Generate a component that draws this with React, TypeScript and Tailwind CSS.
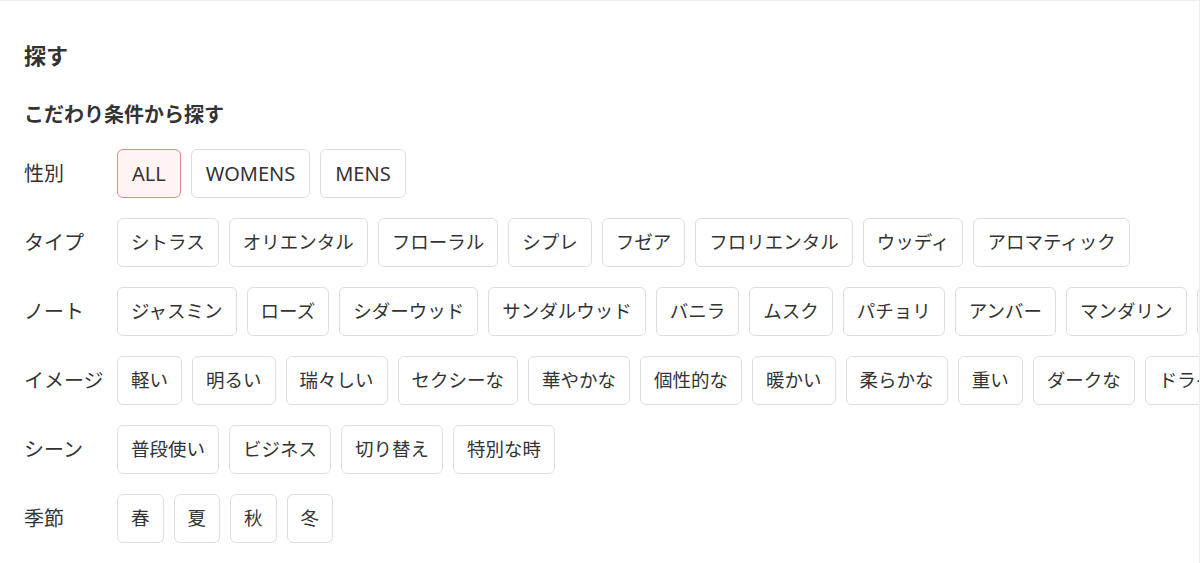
import React, { useState } from 'react'

type Row = {
  label: string
  items: string[]
}

const rows: Row[] = [
  { label: '性別', items: ['ALL', 'WOMENS', 'MENS'] },
  {
    label: 'タイプ',
    items: ['シトラス', 'オリエンタル', 'フローラル', 'シプレ', 'フゼア', 'フロリエンタル', 'ウッディ', 'アロマティック'],
  },
  {
    label: 'ノート',
    items: ['ジャスミン', 'ローズ', 'シダーウッド', 'サンダルウッド', 'バニラ', 'ムスク', 'パチョリ', 'アンバー', 'マンダリン', 'ベルガモット'],
  },
  {
    label: 'イメージ',
    items: ['軽い', '明るい', '瑞々しい', 'セクシーな', '華やかな', '個性的な', '暖かい', '柔らかな', '重い', 'ダークな', 'ドライな'],
  },
  { label: 'シーン', items: ['普段使い', 'ビジネス', '切り替え', '特別な時'] },
  { label: '季節', items: ['春', '夏', '秋', '冬'] },
]

const Chip = ({ text, active, onClick }: { text: string; active: boolean; onClick: () => void }) => {
  const latin = /^[A-Z]+$/.test(text)
  return (
    <button
      type="button"
      onClick={onClick}
      className={
        (active
          ? 'border-[#f08585] bg-[#fff4f4] '
          : 'border-[#dedede] bg-white ') +
        (latin ? 'px-[14px] ' : 'px-[13px] ') +
        'h-[49px] shrink-0 whitespace-nowrap rounded-[6px] border-[1.5px] text-[#333]'
      }
    >
      {latin ? (
        <span className="font-['Noto_Sans',sans-serif] text-[20px] leading-[28px]">{text}</span>
      ) : (
        <span className="text-[18.5px]">{text}</span>
      )}
    </button>
  )
}

export default function App() {
  const [selected, setSelected] = useState<Record<string, string>>({ 性別: 'ALL' })

  return (
    <div className="h-[563px] w-[1200px] overflow-hidden border-t border-r border-[#f2ecec] bg-white font-['Liberation_Sans','Noto_Sans_CJK_JP',sans-serif] text-[#333]">
      <div className="pl-6 pt-[40px]">
        <h1 className="text-[22px] font-bold leading-[32px]">探す</h1>
        <h2 className="mt-[28px] text-[20px] font-bold leading-[28px]">こだわり条件から探す</h2>

        {/* 条件 */}
        <div className="mt-[20px] flex flex-col gap-[20px]">
          {rows.map((row) => (
            <div key={row.label} className="flex items-center">
              <div className="w-[93px] shrink-0 text-[20px] leading-[28px]">{row.label}</div>
              <div className="flex gap-[10px]">
                {row.items.map((item) => (
                  <Chip
                    key={item}
                    text={item}
                    active={selected[row.label] === item}
                    onClick={() =>
                      setSelected({
                        ...selected,
                        [row.label]: selected[row.label] === item ? '' : item,
                      })
                    }
                  />
                ))}
              </div>
            </div>
          ))}
        </div>
      </div>
    </div>
  )
}
